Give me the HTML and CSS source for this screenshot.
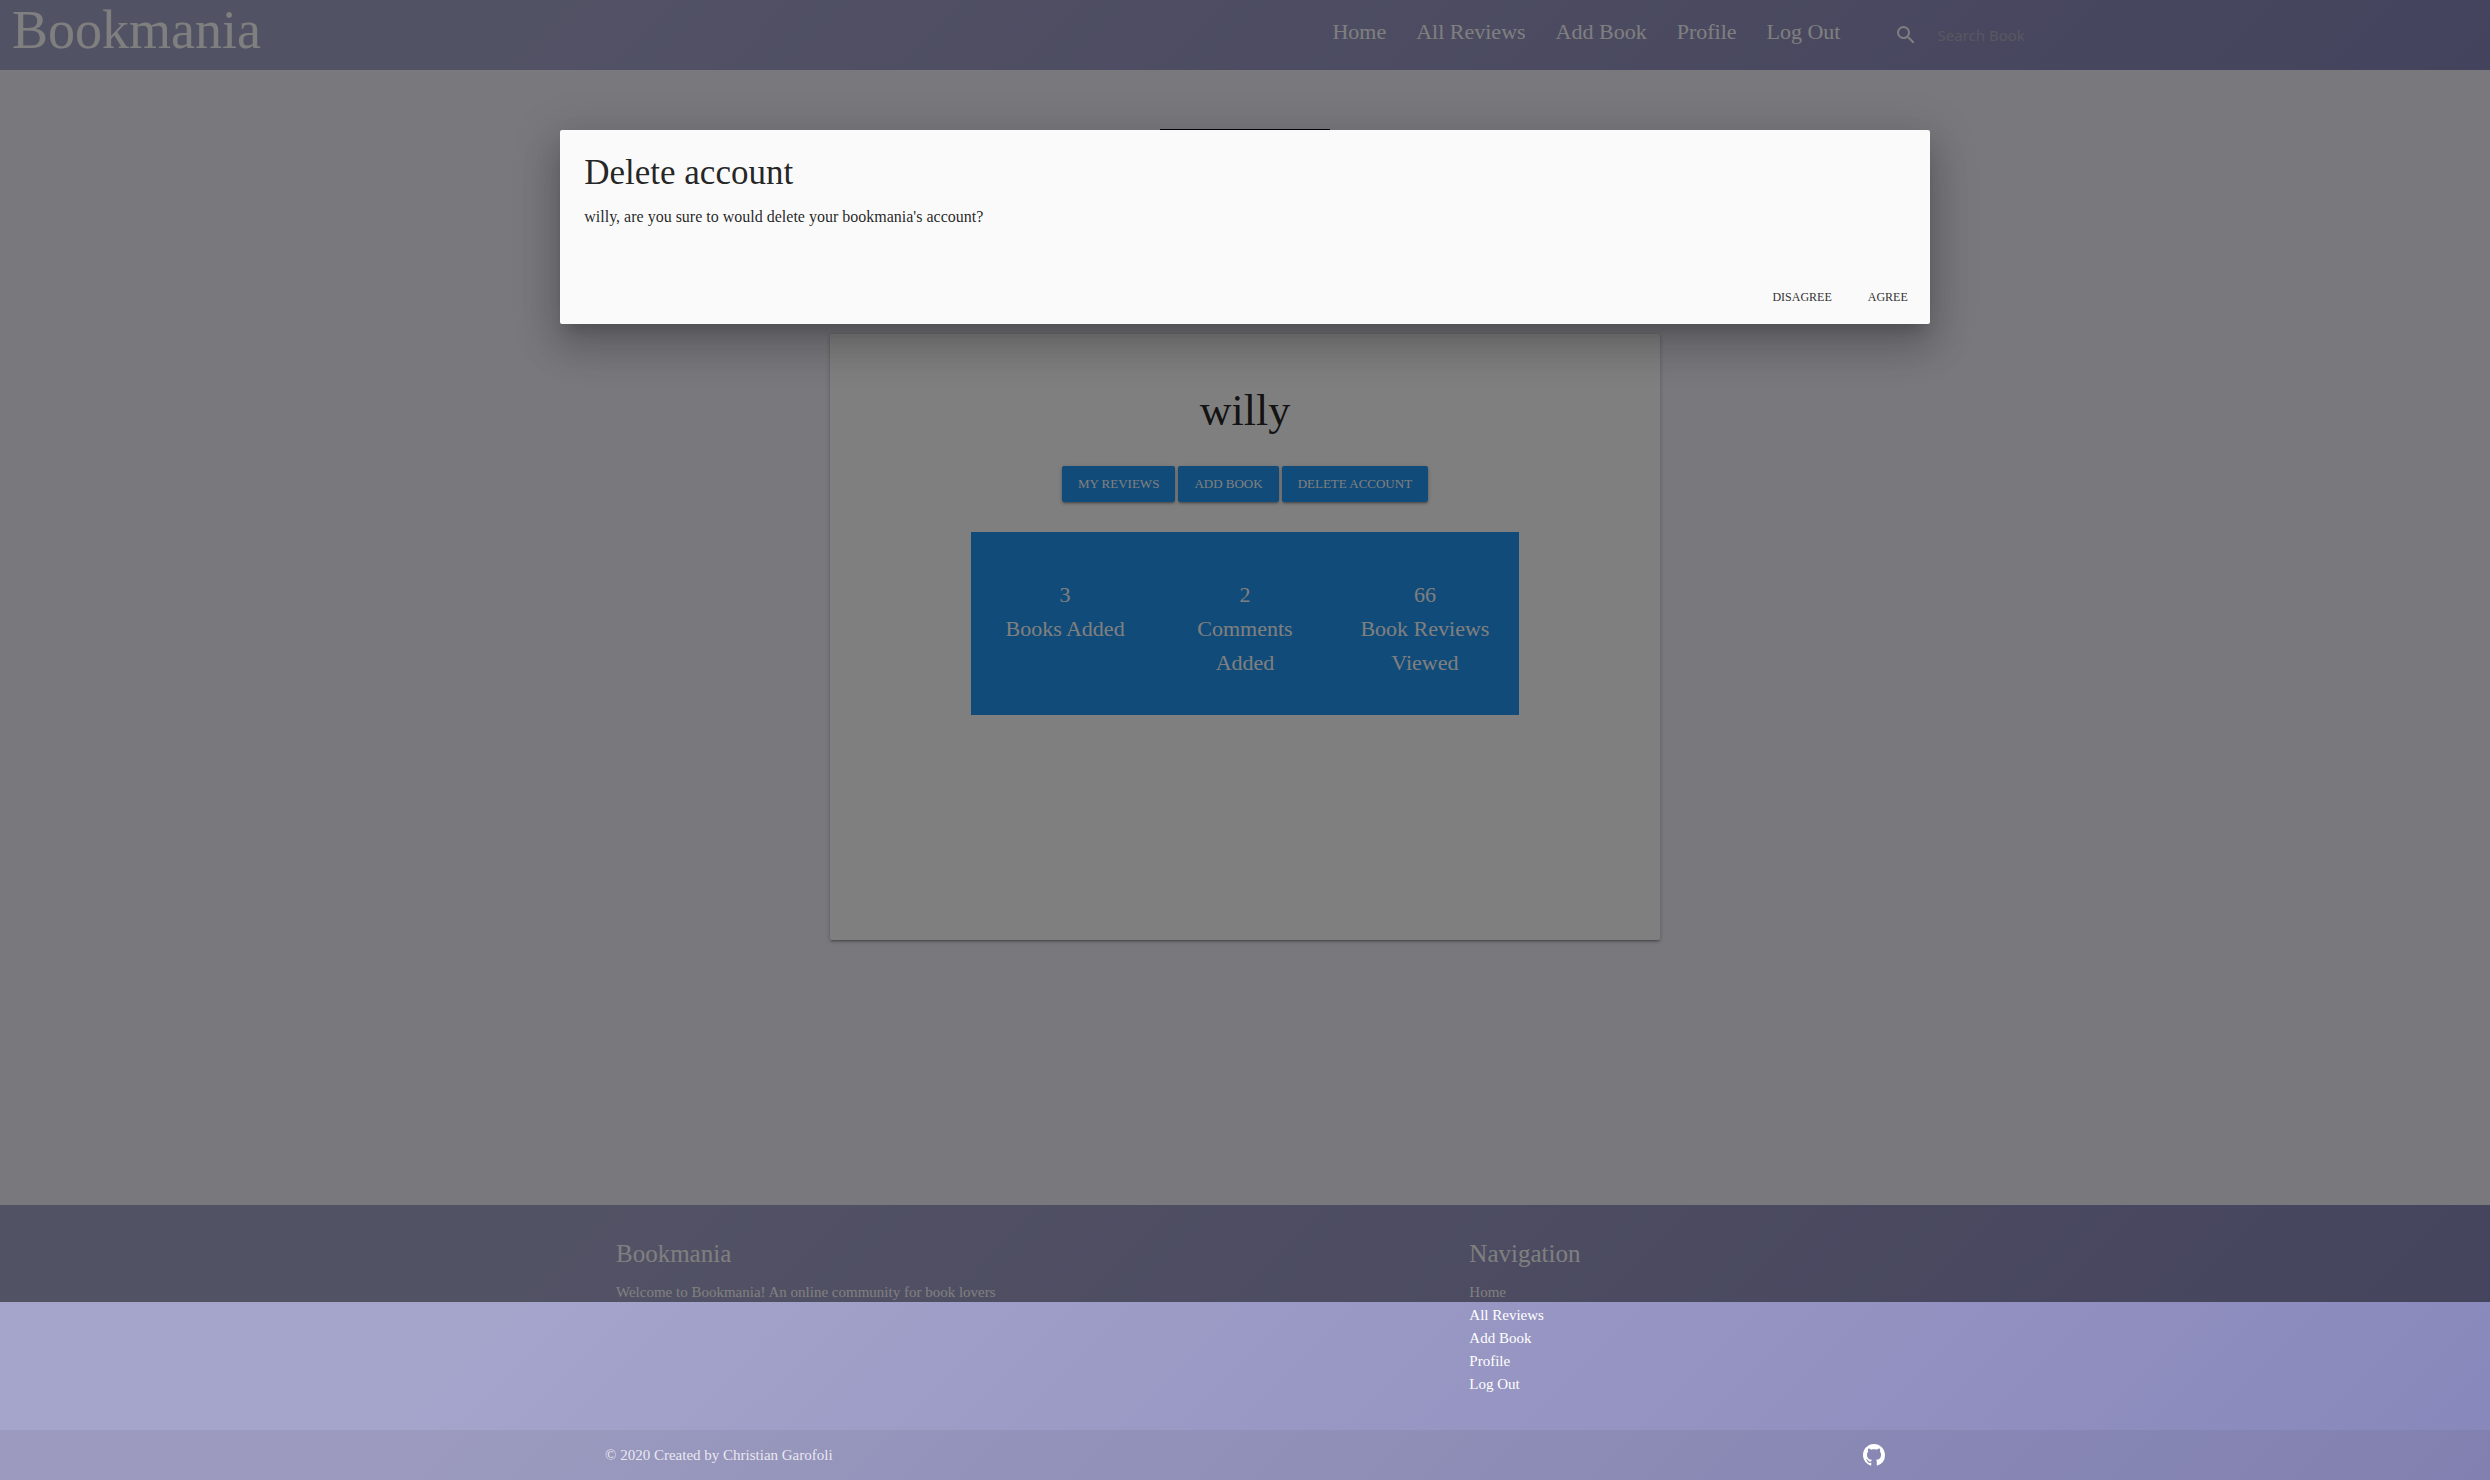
FILE: index.html
```html
<!DOCTYPE html>
<html lang="en">
<head>
<meta charset="utf-8">
<title>Bookmania</title>
<link rel="stylesheet" href="styles.css">
</head>
<body>
<header class="topbar">
  <a class="brand" href="#">Bookmania</a>
  <nav class="menu">
    <a href="#">Home</a>
    <a href="#">All Reviews</a>
    <a href="#">Add Book</a>
    <a href="#">Profile</a>
    <a href="#">Log Out</a>
  </nav>
  <form class="search">
    <label for="search" aria-label="Search Book">
      <svg width="24" height="24" viewBox="0 0 24 24" fill="currentColor"><path d="M15.5 14h-.79l-.28-.27A6.471 6.471 0 0 0 16 9.500 6.500 6.500 0 1 0 9.500 16c1.610 0 3.090-.59 4.230-1.570l.27.28v.79l5 4.990L20.490 19l-4.990-5zm-6 0C7.010 14 5 11.990 5 9.500S7.010 5 9.500 5 14 7.010 14 9.500 11.990 14 9.500 14z"/></svg>
    </label>
    <input id="search" type="search" placeholder="Search Book">
  </form>
</header>

<main class="page">
  <div class="avatar"></div>
  <section class="card">
    <h1 class="username">willy</h1>
    <div class="actions">
      <button class="btn" type="button">MY REVIEWS</button>
      <button class="btn" type="button">ADD BOOK</button>
      <button class="btn" type="button">DELETE ACCOUNT</button>
    </div>
    <div class="stats">
      <div>3<br>Books Added</div>
      <div>2<br>Comments Added</div>
      <div>66<br>Book Reviews Viewed</div>
    </div>
  </section>
</main>

<footer class="footer">
  <div class="container footer-main">
    <section>
      <h2>Bookmania</h2>
      <p>Welcome to Bookmania! An online community for book lovers</p>
    </section>
    <section>
      <h2>Navigation</h2>
      <ul>
        <li><a href="#">Home</a></li>
        <li><a href="#">All Reviews</a></li>
        <li><a href="#">Add Book</a></li>
        <li><a href="#">Profile</a></li>
        <li><a href="#">Log Out</a></li>
      </ul>
    </section>
  </div>
  <div class="copyright">
    <div class="container copyright-row">
      <span>© 2020 Created by Christian Garofoli</span>
      <a class="github" href="#" aria-label="GitHub">
        <svg width="22" height="22" viewBox="0 0 16 16" fill="currentColor"><path d="M8 0C3.580 0 0 3.580 0 8c0 3.540 2.290 6.530 5.470 7.590.4.07.55-.17.55-.38 0-.19-.01-.82-.01-1.490-2.010.37-2.530-.49-2.690-.94-.09-.23-.48-.94-.82-1.130-.28-.15-.68-.52-.01-.53.63-.01 1.080.58 1.230.82.72 1.210 1.870.87 2.330.66.07-.52.28-.87.51-1.070-1.780-.2-3.640-.89-3.640-3.950 0-.87.31-1.590.82-2.150-.08-.2-.36-1.020.08-2.120 0 0 .67-.21 2.200.82.64-.18 1.320-.27 2-.27s1.360.09 2 .27c1.530-1.040 2.200-.82 2.200-.82.44 1.100.16 1.920.08 2.120.51.56.82 1.270.82 2.150 0 3.070-1.870 3.750-3.650 3.950.29.25.54.73.54 1.480 0 1.070-.01 1.930-.01 2.200 0 .21.15.46.55.38A8.010 8.010 0 0 0 16 8c0-4.420-3.580-8-8-8z"/></svg>
      </a>
    </div>
  </div>
</footer>

<div class="overlay"></div>
<div class="modal" role="dialog" aria-labelledby="modal-title">
  <div class="modal-content">
    <h2 id="modal-title">Delete account</h2>
    <p>willy, are you sure to would delete your bookmania's account?</p>
  </div>
  <div class="modal-footer">
    <button type="button">DISAGREE</button>
    <button type="button">AGREE</button>
  </div>
</div>
</body>
</html>
```
FILE: styles.css
```css
* {
  box-sizing: border-box;
}

body {
  margin: 0;
  min-height: 100vh;
  display: flex;
  flex-direction: column;
  background: #f3f0fa;
  color: rgba(0, 0, 0, 0.87);
  font-family: "Gentium Book Basic", "Liberation Serif", serif;
  font-size: 15px;
  line-height: 23px;
}

h1, h2, p, ul {
  margin: 0;
  padding: 0;
  font-weight: 400;
}

ul {
  list-style: none;
}

a {
  color: inherit;
  text-decoration: none;
}

button {
  border: 0;
  font-family: inherit;
}

.topbar,
.footer {
  background: linear-gradient(135deg, #a5a4cb 22%, #8887bb);
  color: #fff;
}

.topbar {
  display: flex;
  height: 70px;
}

.brand {
  margin-right: auto;
  padding-left: 12px;
  font-size: 54px;
  line-height: 60px;
}

.menu {
  display: flex;
  font-size: 22px;
  line-height: 64px;
}

.menu a {
  padding: 0 15px;
}

.search {
  flex: 0 0 25%;
  display: flex;
  align-items: center;
  gap: 20px;
  margin-left: 12px;
  padding-left: 26px;
}

.search label {
  display: flex;
}

.search input {
  flex: 1;
  border: 0;
  padding: 0;
  background: none;
  color: #fff;
  font-family: "Noto Sans", sans-serif;
  font-size: 15px;
}

.search input::placeholder {
  color: #afafbf;
  opacity: 1;
}

.page {
  flex: 1;
  display: flex;
  flex-direction: column;
  align-items: center;
  padding-top: 59px;
}

.avatar {
  width: 170px;
  height: 170px;
  background: #120c1c;
}

.card {
  width: 33.333%;
  min-height: 606px;
  margin-top: 35px;
  padding-top: 52px;
  display: flex;
  flex-direction: column;
  align-items: center;
  background: #fff;
  border-radius: 2px;
  box-shadow: 0 2px 2px rgba(0, 0, 0, 0.14), 0 3px 1px -2px rgba(0, 0, 0, 0.12), 0 1px 5px rgba(0, 0, 0, 0.2);
}

.username {
  font-size: 44px;
  line-height: 50px;
}

.actions {
  display: flex;
  gap: 3px;
  margin: 30px 0;
}

.btn {
  height: 36px;
  padding: 0 16px;
  border-radius: 2px;
  background: #2196f3;
  color: #fff;
  font-size: 13px;
  box-shadow: 0 2px 2px rgba(0, 0, 0, 0.14), 0 3px 1px -2px rgba(0, 0, 0, 0.12), 0 1px 5px rgba(0, 0, 0, 0.2);
}

.stats {
  width: 66%;
  min-height: 183px;
  padding: 46px 4px 35px;
  display: grid;
  grid-template-columns: repeat(3, 1fr);
  background: #2196f3;
  color: #fff;
  font-size: 22px;
  line-height: 34px;
  text-align: center;
}

.stats div {
  padding: 0 24px;
}

.container {
  width: 80%;
  max-width: 1280px;
  margin: 0 auto;
}

.footer-main {
  display: grid;
  grid-template-columns: 2fr 1fr;
  padding: 36px 0 34px;
}

.footer-main section {
  padding: 0 11px;
}

.footer-main h2 {
  margin-bottom: 14px;
  font-size: 25px;
  line-height: 26px;
}

.copyright {
  background: rgba(51, 51, 51, 0.08);
}

.copyright-row {
  display: flex;
  align-items: center;
  justify-content: space-between;
  height: 50px;
  color: rgba(255, 255, 255, 0.8);
}

.github {
  display: flex;
  color: #fff;
}

.overlay {
  position: absolute;
  top: 0;
  left: 0;
  width: 100%;
  height: 88vh;
  background: rgba(0, 0, 0, 0.5);
}

.modal {
  position: absolute;
  top: 130px;
  left: 0;
  right: 0;
  width: 55%;
  margin: 0 auto;
  background: #fafafa;
  border-radius: 2px;
  box-shadow: 0 24px 38px 3px rgba(0, 0, 0, 0.14), 0 9px 46px 8px rgba(0, 0, 0, 0.12), 0 11px 15px -7px rgba(0, 0, 0, 0.2);
}

.modal-content {
  padding: 24px 24px 40px;
}

.modal-content h2 {
  margin-bottom: 14px;
  font-size: 35px;
  line-height: 37px;
}

.modal-content p {
  font-size: 16px;
}

.modal-footer {
  display: flex;
  justify-content: flex-end;
  align-items: center;
  gap: 4px;
  height: 56px;
  padding: 2px 6px 0;
}

.modal-footer button {
  height: 36px;
  padding: 0 16px;
  background: none;
  color: #343434;
  font-size: 12px;
}
```
